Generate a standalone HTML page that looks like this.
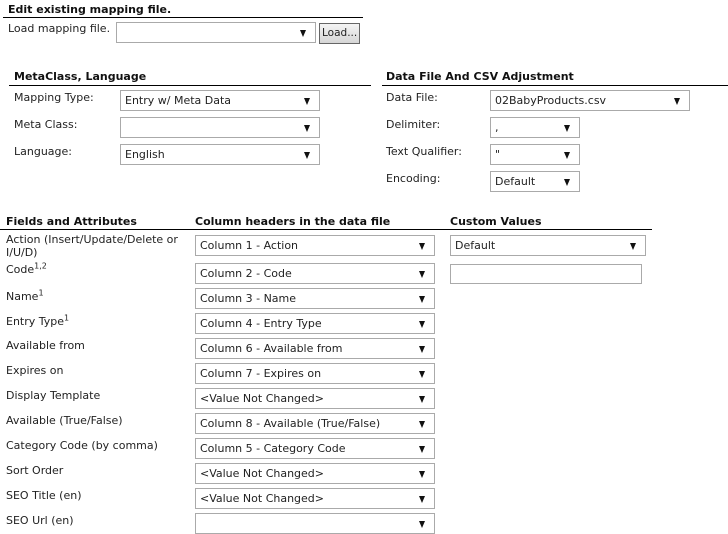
<!DOCTYPE html><html><head><style>
body{margin:0;width:728px;height:517px;overflow:hidden;background:#fff;font-family:"DejaVu Sans","Liberation Sans",sans-serif;font-size:11px;color:#222;position:relative}
.a{position:absolute;white-space:nowrap}
.b{font-weight:bold;color:#111}
.l{position:absolute;height:1px;background:#000}
.s{position:absolute;box-sizing:border-box;border:1px solid #aaa;background:#fff;height:21px;padding:3px 0 0 4px;white-space:nowrap}
.s:after{content:"";position:absolute;right:9px;top:7px;border-left:3.5px solid transparent;border-right:3.5px solid transparent;border-top:7px solid #111}
sup{font-size:8px;line-height:0}
</style></head><body>
<div class="a b" style="left:8px;top:3px">Edit existing mapping file.</div>
<div class="l" style="left:3px;top:17px;width:360px"></div>
<div class="a" style="left:8px;top:22px">Load mapping file.</div>
<div class="s" style="left:116px;top:22px;width:200px"></div>
<div class="a" style="left:319px;top:23px;width:41px;height:21px;box-sizing:border-box;border:1px solid #666;background:linear-gradient(#f4f4f4,#d6d6d6);padding:3px 0 0 2px;font-size:10.5px;overflow:hidden">Load...</div>

<div class="a b" style="left:14px;top:70px">MetaClass, Language</div>
<div class="l" style="left:9px;top:85px;width:362px"></div>
<div class="a" style="left:14px;top:91px">Mapping Type:</div>
<div class="s" style="left:120px;top:90px;width:200px">Entry w/ Meta Data</div>
<div class="a" style="left:14px;top:118px">Meta Class:</div>
<div class="s" style="left:120px;top:117px;width:200px"></div>
<div class="a" style="left:14px;top:145px">Language:</div>
<div class="s" style="left:120px;top:144px;width:200px">English</div>

<div class="a b" style="left:386px;top:70px">Data File And CSV Adjustment</div>
<div class="l" style="left:382px;top:85px;width:346px"></div>
<div class="a" style="left:386px;top:91px">Data File:</div>
<div class="s" style="left:490px;top:90px;width:200px">02BabyProducts.csv</div>
<div class="a" style="left:386px;top:118px">Delimiter:</div>
<div class="s" style="left:490px;top:117px;width:90px">,</div>
<div class="a" style="left:386px;top:145px">Text Qualifier:</div>
<div class="s" style="left:490px;top:144px;width:90px">"</div>
<div class="a" style="left:386px;top:172px">Encoding:</div>
<div class="s" style="left:490px;top:171px;width:90px">Default</div>

<div class="a b" style="left:6px;top:215px">Fields and Attributes</div>
<div class="a b" style="left:195px;top:215px">Column headers in the data file</div>
<div class="a b" style="left:450px;top:215px">Custom Values</div>
<div class="l" style="left:0;top:229px;width:652px"></div>

<div class="a" style="left:6px;top:233px;line-height:13px">Action (Insert/Update/Delete or<br>I/U/D)</div>
<div class="s" style="left:195px;top:235px;width:240px">Column 1 - Action</div>
<div class="s" style="left:450px;top:235px;width:196px">Default</div>
<div class="a" style="left:6px;top:263px">Code<sup>1,2</sup></div>
<div class="s" style="left:195px;top:263px;width:240px">Column 2 - Code</div>
<div class="a" style="left:450px;top:264px;width:192px;height:20px;box-sizing:border-box;border:1px solid #aaa"></div>
<div class="a" style="left:6px;top:290px">Name<sup>1</sup></div>
<div class="s" style="left:195px;top:288px;width:240px">Column 3 - Name</div>
<div class="a" style="left:6px;top:315px">Entry Type<sup>1</sup></div>
<div class="s" style="left:195px;top:313px;width:240px">Column 4 - Entry Type</div>
<div class="a" style="left:6px;top:339px">Available from</div>
<div class="s" style="left:195px;top:338px;width:240px">Column 6 - Available from</div>
<div class="a" style="left:6px;top:364px">Expires on</div>
<div class="s" style="left:195px;top:363px;width:240px">Column 7 - Expires on</div>
<div class="a" style="left:6px;top:389px">Display Template</div>
<div class="s" style="left:195px;top:388px;width:240px">&lt;Value Not Changed&gt;</div>
<div class="a" style="left:6px;top:414px">Available (True/False)</div>
<div class="s" style="left:195px;top:413px;width:240px">Column 8 - Available (True/False)</div>
<div class="a" style="left:6px;top:439px">Category Code (by comma)</div>
<div class="s" style="left:195px;top:438px;width:240px">Column 5 - Category Code</div>
<div class="a" style="left:6px;top:464px">Sort Order</div>
<div class="s" style="left:195px;top:463px;width:240px">&lt;Value Not Changed&gt;</div>
<div class="a" style="left:6px;top:489px">SEO Title (en)</div>
<div class="s" style="left:195px;top:488px;width:240px">&lt;Value Not Changed&gt;</div>
<div class="a" style="left:6px;top:514px">SEO Url (en)</div>
<div class="s" style="left:195px;top:513px;width:240px"></div>
</body></html>
